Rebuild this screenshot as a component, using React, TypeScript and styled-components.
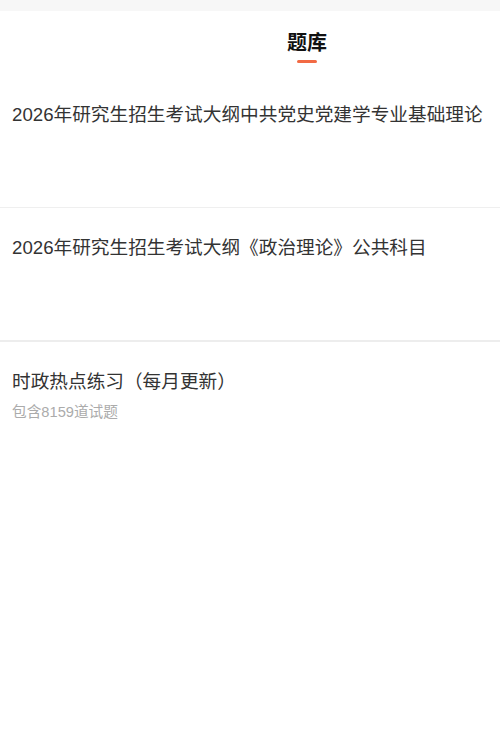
import React from 'react';
import styled, {createGlobalStyle} from "styled-components";

const GlobalStyle = createGlobalStyle`
    html, body {
        margin: 0;
        padding: 0;
        background: #ffffff;
    }
    body {
        font-family: "Liberation Sans", "Noto Sans CJK SC", sans-serif;
        color: #333333;
    }
`;

type Bank = {
    title: string;
    count?: number;
};

const banks: Bank[] = [
    {title: '2026年研究生招生考试大纲中共党史党建学专业基础理论'},
    {title: '2026年研究生招生考试大纲《政治理论》公共科目'},
    {title: '时政热点练习（每月更新）', count: 8159},
];

export default function App() {
    return (
        <>
            <GlobalStyle/>
            <Page>
                <TopStrip/>
                <TabBar>
                    <Tab $active>
                        题库
                        <TabLine/>
                    </Tab>
                </TabBar>
                <List>
                    {banks.map((b, i) => (
                        <Row key={b.title} $last={i === banks.length - 1} $thick={i === 1}>
                            <RowTitle>{b.title}</RowTitle>
                            {b.count !== undefined && <RowMeta>包含{b.count}道试题</RowMeta>}
                        </Row>
                    ))}
                </List>
            </Page>
        </>
    );
}

const Page = styled.div`
    width: 500px;
    min-height: 740px;
    background: #ffffff;
    display: flex;
    flex-direction: column;
`;

const TopStrip = styled.div`
    height: 11px;
    background: #f7f7f7;
`;

const TabBar = styled.nav`
    height: 64px;
    display: flex;
    justify-content: center;
    padding-left: 114px;
    box-sizing: border-box;
`;

const Tab = styled.div<{ $active?: boolean }>`
    display: flex;
    flex-direction: column;
    align-items: center;
    padding-top: 18px;
    font-size: 20px;
    line-height: 28px;
    font-weight: ${p => p.$active ? 700 : 400};
    color: ${p => p.$active ? '#111111' : '#666666'};
`;

const TabLine = styled.span`
    margin-top: 3px;
    width: 20px;
    height: 3px;
    border-radius: 2px;
    background: #f26a44;
`;

const List = styled.div`
    display: flex;
    flex-direction: column;
`;

const Row = styled.div<{ $last?: boolean; $thick?: boolean }>`
    min-height: ${p => p.$last ? 'auto' : p.$thick ? '134px' : '133px'};
    box-sizing: border-box;
    padding: 26px 12px 12px;
    border-bottom: ${p => p.$last ? 'none' : p.$thick ? '2px solid #ededed' : '1px solid #efefef'};
`;

const RowTitle = styled.div`
    font-size: 18.67px;
    line-height: 28px;
    color: #333333;
    white-space: nowrap;
`;

const RowMeta = styled.div`
    margin-top: 6px;
    font-size: 14.67px;
    line-height: 20px;
    color: #ababab;
`;
